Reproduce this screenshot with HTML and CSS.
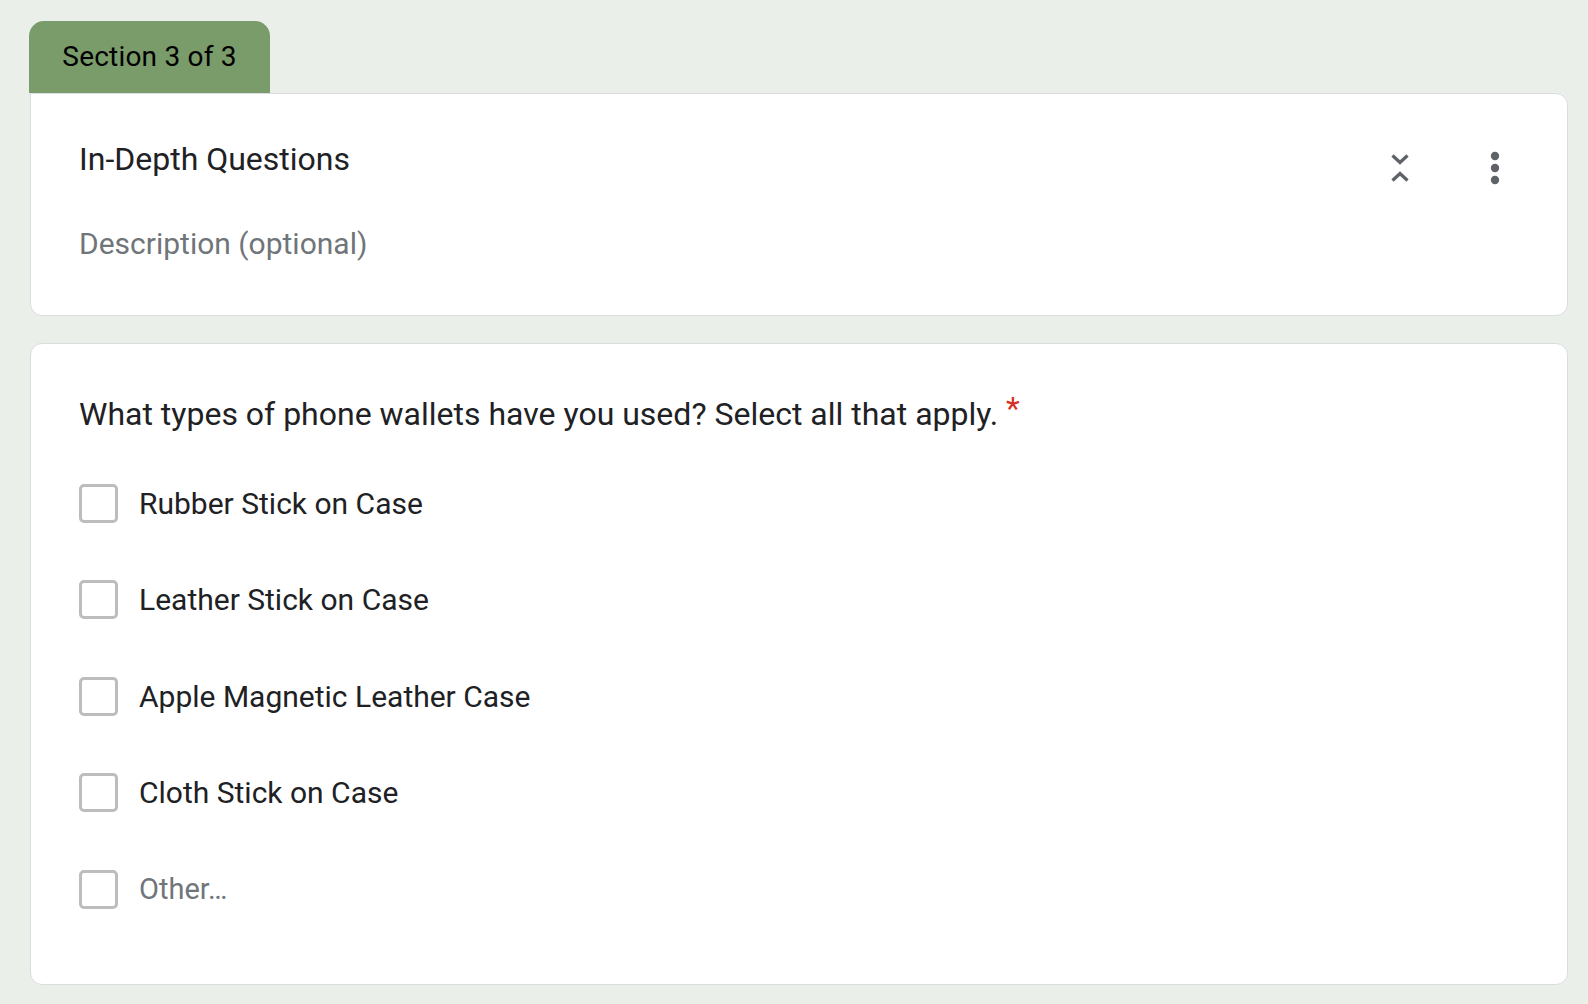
FILE: index.html
```html
<!DOCTYPE html>
<html>
<head>
<meta charset="utf-8">
<link rel="stylesheet" href="styles.css">
</head>
<body>
<div class="page">
  <div class="tab">Section 3 of 3</div>
  <div class="card header-card">
    <div class="header-text">
      <div class="title">In-Depth Questions</div>
      <div class="desc">Description (optional)</div>
    </div>
    <div class="header-icons">
      <svg class="icon collapse" width="20" height="32" viewBox="0 0 20 32">
        <path d="M2.5 3.5 L10 10.5 L17.5 3.5" fill="none" stroke="#5f6368" stroke-width="3.3"/>
        <path d="M2.5 28.5 L10 21.5 L17.5 28.5" fill="none" stroke="#5f6368" stroke-width="3.3"/>
      </svg>
      <svg class="icon more" width="12" height="36" viewBox="0 0 12 36">
        <circle cx="6" cy="6" r="4.2" fill="#5f6368"/>
        <circle cx="6" cy="18" r="4.2" fill="#5f6368"/>
        <circle cx="6" cy="30" r="4.2" fill="#5f6368"/>
      </svg>
    </div>
  </div>
  <div class="card question-card">
    <div class="question">What types of phone wallets have you used? Select all that apply. <span class="req">*</span></div>
    <div class="options">
      <div class="option"><span class="box"></span><span class="label">Rubber Stick on Case</span></div>
      <div class="option"><span class="box"></span><span class="label">Leather Stick on Case</span></div>
      <div class="option"><span class="box"></span><span class="label">Apple Magnetic Leather Case</span></div>
      <div class="option"><span class="box"></span><span class="label">Cloth Stick on Case</span></div>
      <div class="option"><span class="box"></span><span class="label other">Other…</span></div>
    </div>
  </div>
</div>
</body>
</html>
```
FILE: styles.css
```css
html, body {
  margin: 0;
  padding: 0;
  background: #eaf0e9;
  font-family: Roboto, "Noto Sans", Arial, sans-serif;
  color: #202124;
}
.page {
  padding: 21px 20px 0 29px;
  display: flex;
  flex-direction: column;
  align-items: flex-start;
}
.tab {
  background: #7a9b6a;
  color: #000;
  font-size: 28px;
  line-height: 34px;
  height: 72px;
  width: 241px;
  box-sizing: border-box;
  padding-top: 19px;
  text-align: center;
  border-radius: 15px 15px 0 0;
  letter-spacing: 0.2px;
}
.card {
  background: #fff;
  border: 1.5px solid #dadce0;
  border-radius: 12px;
  box-sizing: border-box;
  width: 1538px;
  margin-left: 1px;
}
.header-card {
  border-top-left-radius: 0;
  height: 223px;
  display: flex;
  justify-content: space-between;
  padding: 45px 66px 0 48px;
}
.title {
  font-size: 32px;
  line-height: 40px;
}
.desc {
  font-size: 30px;
  line-height: 40px;
  color: #70757a;
  margin-top: 45px;
}
.header-icons {
  display: flex;
  align-items: center;
  gap: 79px;
  padding-top: 11px;
  height: 36px;
}
.icon { display: block; }
.question-card {
  margin-top: 27px;
  height: 642px;
  padding: 50px 48px 0 48px;
}
.question {
  font-size: 32px;
  line-height: 40px;
}
.req {
  color: #d93025;
  margin-left: 0;
  font-size: 32px;
  vertical-align: top;
  position: relative;
  top: -6px;
}
.options {
  display: flex;
  flex-direction: column;
  gap: 57.4px;
  margin-top: 50px;
}
.option {
  display: flex;
  align-items: center;
  height: 39px;
}
.box {
  width: 39px;
  height: 39px;
  border: 3.2px solid #bdbdbd;
  border-radius: 5px;
  box-sizing: border-box;
  flex: none;
}
.label {
  font-size: 30px;
  margin-left: 21px;
  line-height: 39px;
}
.other {
  color: #70757a;
  font-size: 29px;
}
```
